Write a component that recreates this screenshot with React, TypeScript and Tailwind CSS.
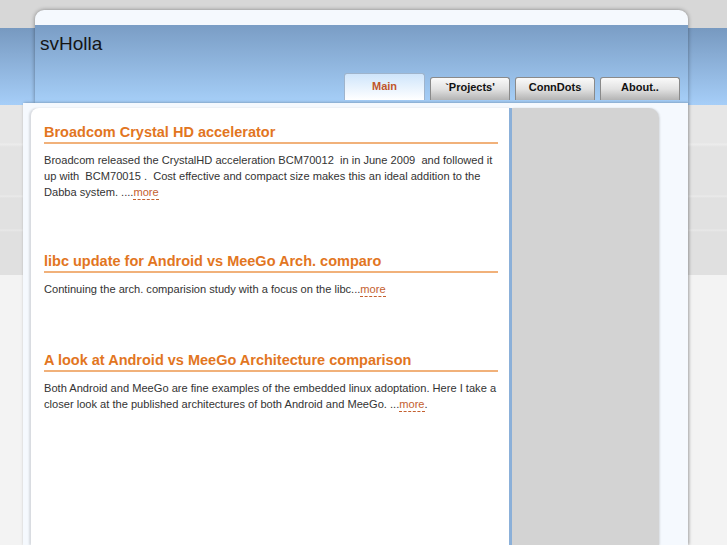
import type { ReactNode } from 'react'

const tabs = [
  { label: 'Main', active: true },
  { label: '`Projects\'', active: false },
  { label: 'ConnDots', active: false },
  { label: 'About..', active: false },
]

function More({ dot }: { dot?: boolean }) {
  return (
    <>
      <a href="#" className="text-[#c4602f] border-b border-dashed border-[#c4602f] pb-[1px] no-underline">
        more
      </a>
      {dot && '.'}
    </>
  )
}

function Post({ title, children, gap }: { title: string; children: ReactNode; gap: string }) {
  return (
    <div className={gap}>
      <h2 className="text-[14.5px] leading-[20px] font-bold text-[#e2761f] border-b-2 border-[#f1b17a]">
        {title}
      </h2>
      <p className="mt-[8px] text-[11.1px] leading-[16px] text-[#333]">{children}</p>
    </div>
  )
}

export default function App() {
  return (
    <div
      className="h-[545px] overflow-hidden pt-[10px] font-['Liberation_Sans',Arial,sans-serif] bg-[linear-gradient(to_bottom,#d7d7d7_0,#d7d7d7_28px,#7799c0_28px,#a6cef8_105px,#e6e6e6_105px,#e6e6e6_143px,#ededed_144px,#e3e3e3_147px,#e3e3e3_195px,#ebebeb_196px,#e1e1e1_198px,#e1e1e1_229px,#e9e9e9_230px,#e0e0e0_232px,#e0e0e0_275px,#f3f3f3_275px)]"
    >
      {/* header */}
      <div className="ml-[35px] w-[653px] rounded-t-[9px] bg-[#f5f9fe] shadow-[0_0_4px_rgba(0,0,0,0.4)]">
        <div className="h-[15px]" />
        <div className="h-[78px] flex flex-col justify-between bg-gradient-to-b from-[#7a9dc5] to-[#a6cff8]">
          <div className="pl-[5px] pt-[8px] text-[19px] leading-[22px] text-[#151515]">svHolla</div>
          <div className="flex justify-end items-end gap-[5px] pr-[8px] pb-[3px]">
            {tabs.map((t) =>
              t.active ? (
                <div
                  key={t.label}
                  className="w-[81px] h-[27px] pt-[4px] text-center rounded-t-[3px] border border-b-0 border-[#9fb4cc] bg-gradient-to-b from-[#cfe5fb] to-[#ffffff] text-[11px] font-bold text-[#c0562b]"
                >
                  {t.label}
                </div>
              ) : (
                <div
                  key={t.label}
                  className="w-[80px] h-[23px] pt-[1px] text-center rounded-t-[3px] border border-b-0 border-[#8a8a8a] bg-gradient-to-b from-[#fafafa] via-[#e2e2e2] to-[#b4b4b4] text-[11px] font-bold text-[#111]"
                >
                  {t.label}
                </div>
              )
            )}
          </div>
        </div>
      </div>

      {/* body */}
      <div className="ml-[23px] w-[665px] h-[442px] flex bg-[#f5f9fe] pt-[5px] pl-[8px] pr-[29px] shadow-[1px_0_3px_rgba(0,0,0,0.35)]">
        <div className="w-[481px] bg-white rounded-tl-[8px] border-r-[3px] border-[#8bb0d9] shadow-[-2px_0_2px_rgba(0,0,0,0.12)] pt-[14px] pl-[13px] pr-[11px]">
          <Post gap="" title="Broadcom Crystal HD accelerator">
            Broadcom released the CrystalHD acceleration BCM70012 &nbsp;in in June 2009 &nbsp;and followed it up with
            &nbsp;BCM70015 . &nbsp;Cost effective and compact size makes this an ideal addition to the Dabba system. ....
            <More />
          </Post>
          <Post gap="mt-[51px]" title="libc update for Android vs MeeGo Arch. comparo">
            Continuing the arch. comparision study with a focus on the libc...
            <More />
          </Post>
          <Post gap="mt-[53px]" title="A look at Android vs MeeGo Architecture comparison">
            Both Android and MeeGo are fine examples of the embedded linux adoptation. Here I take a closer look at the
            published architectures of both Android and MeeGo. ...
            <More dot />
          </Post>
        </div>
        <div className="w-[147px] bg-[#d3d3d3] rounded-tr-[10px] shadow-[1px_0_2px_rgba(0,0,0,0.12)]" />
      </div>
    </div>
  )
}
